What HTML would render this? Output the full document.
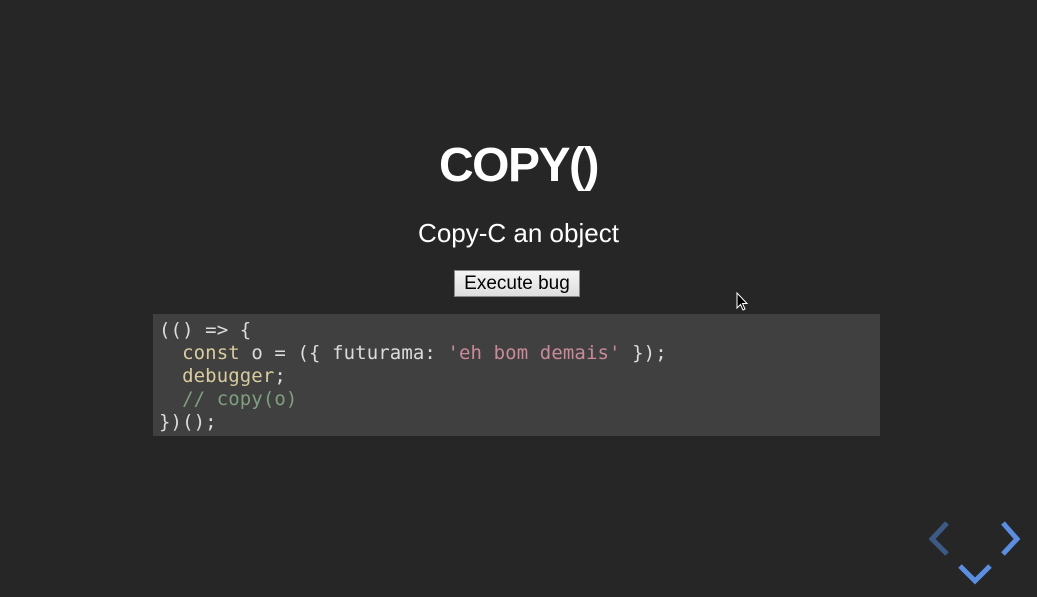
<!DOCTYPE html>
<html><head><style>
body{margin:0;width:1037px;height:597px;background:#262626;overflow:hidden;font-family:"Liberation Sans",sans-serif;position:relative}
h1{position:absolute;left:0;width:1037px;top:136px;margin:0;text-align:center;color:#fff;font-size:48px;font-weight:bold;letter-spacing:-1.5px;line-height:60px}
.sub{position:absolute;left:0;width:1037px;top:217px;text-align:center;color:#fff;font-size:26px;line-height:32px}
button{position:absolute;left:454px;top:270px;width:126px;height:27px;font-family:"Liberation Sans",sans-serif;font-size:19px;background:linear-gradient(#f4f4f4,#dedede);border:1px solid #888;padding:0;color:#000}
pre{position:absolute;left:153px;top:314px;width:721px;height:112px;margin:0;padding:5px 0 5px 6px;background:#404040;color:#dcdcdc;font-family:"DejaVu Sans Mono","Liberation Mono",monospace;font-size:19px;line-height:23px;letter-spacing:0.1px}
.k{color:#d9cc9e}.s{color:#c98a99}.c{color:#7f9f7f}
</style></head><body>
<h1>COPY()</h1>
<div class="sub">Copy-C an object</div>
<button>Execute bug</button>
<pre>(() =&gt; {
  <span class="k">const</span> o = ({ futurama: <span class="s">'eh bom demais'</span> });
  <span class="k">debugger</span>;
  <span class="c">// copy(o)</span>
})();</pre>
<svg style="position:absolute;left:920px;top:510px" width="110" height="87">
<polyline points="27,13 12,29 27,44" fill="none" stroke="#3d5a85" stroke-width="5"/>
<polyline points="83,13 97,29 83,44" fill="none" stroke="#5b8ee0" stroke-width="5"/>
<polyline points="40,56 55,71 70,56" fill="none" stroke="#5b8ee0" stroke-width="5"/>
</svg>
<svg style="position:absolute;left:736px;top:292px" width="14" height="20"><path d="M1,1 L1,16 L4.5,12.5 L7,18 L9,17 L6.5,11.5 L11,11.5 Z" fill="#000" stroke="#fff" stroke-width="1"/></svg>
</body></html>
